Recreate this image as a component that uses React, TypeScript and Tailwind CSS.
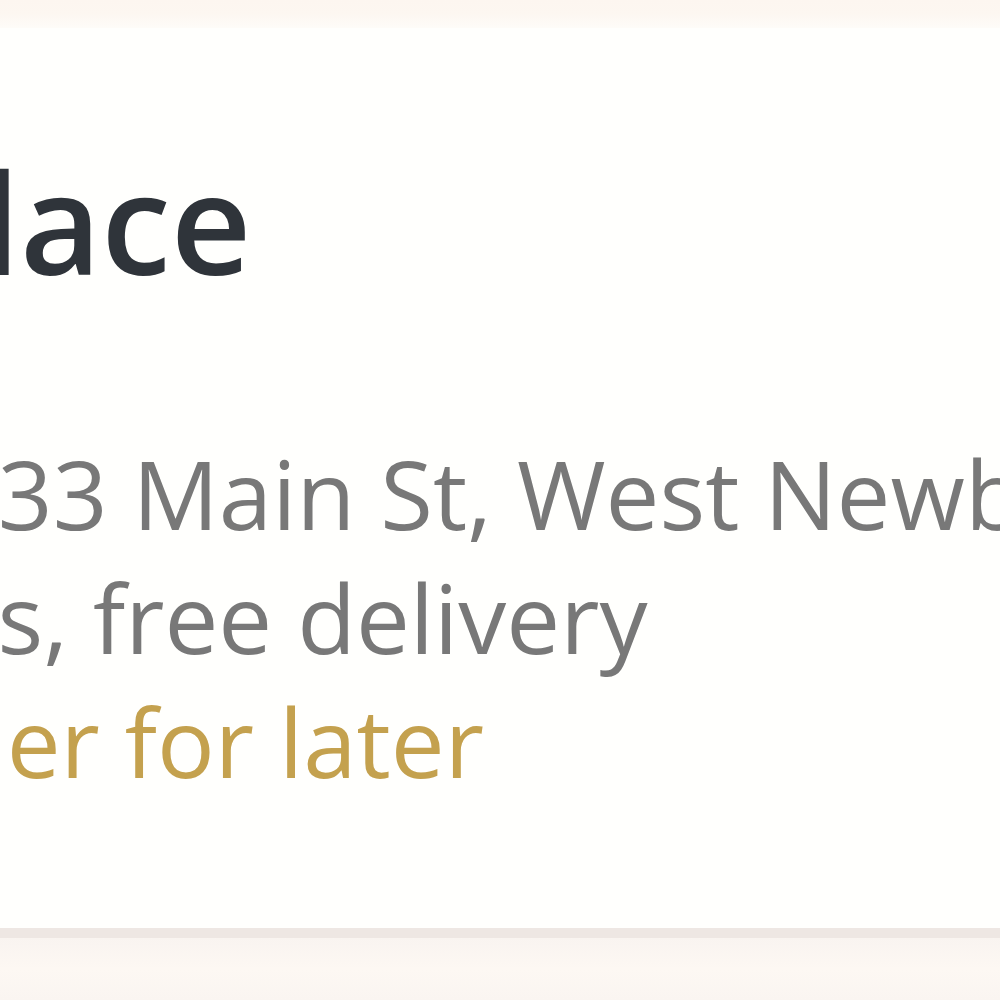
import React from 'react';

const font = { fontFamily: '"Open Sans", "Noto Sans", sans-serif' };

export default function App() {
  return (
    <div className="w-[1000px] h-[1000px] overflow-hidden bg-[#fdf6f0] flex flex-col" style={font}>
      <div className="h-[28px] shrink-0 bg-gradient-to-b from-[#fdf6f0] via-[#fdf7f1] to-[#fefcf8]" />
      <div className="h-[910px] shrink-0 bg-[#fffffd] border-b-[10px] border-[#eee7e3] overflow-hidden">
        <div className="pt-[123px] whitespace-nowrap">
          <h1 className="ml-[-563px] text-[140px] leading-[140px] font-semibold text-[#2f343a]">
            Pizza Palace
          </h1>
          <div className="mt-[140px] text-[96px] leading-[124px]">
            <p className="ml-[-112px] text-[#787878]">1233 Main St, West Newbury, MA</p>
            <p className="ml-[-450px] text-[#787878]">30-45 mins, free delivery</p>
            <p className="ml-[-166px] text-[#c4a14e]">Order for later</p>
          </div>
        </div>
      </div>
      <div className="flex-1 bg-gradient-to-b from-[#f9f4f0] via-[#fdf8f3] to-[#faf5f1]" />
    </div>
  );
}
